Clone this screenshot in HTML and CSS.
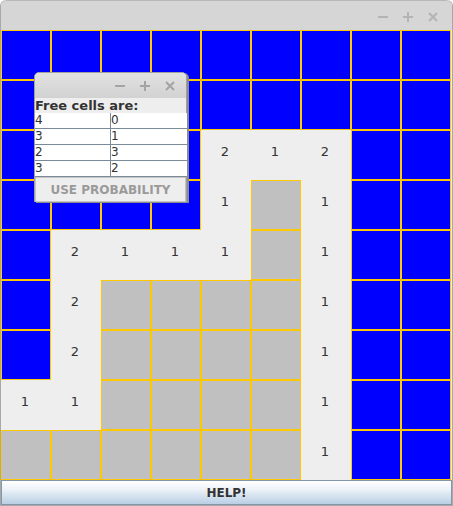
FILE: index.html
```html
<!DOCTYPE html>
<html lang="en">
<head>
    <meta charset="UTF-8">
    <title>Minesweeper</title>
    <link rel="stylesheet" href="styles.css">
</head>
<body>
    <div id="win">
        <div class="titlebar">
            <svg class="ctl" viewBox="0 0 14 14"><path d="M2 7h10"/></svg>
            <svg class="ctl" viewBox="0 0 14 14"><path d="M2 7h10M7 2v10"/></svg>
            <svg class="ctl" viewBox="0 0 14 14"><path d="M3 3l8 8M11 3l-8 8"/></svg>
        </div>
        <div id="board">
            <div class="c b"></div><div class="c b"></div><div class="c b"></div><div class="c b"></div><div class="c b"></div><div class="c b"></div><div class="c b"></div><div class="c b"></div><div class="c b"></div>
            <div class="c b"></div><div class="c b"></div><div class="c b"></div><div class="c b"></div><div class="c b"></div><div class="c b"></div><div class="c b"></div><div class="c b"></div><div class="c b"></div>
            <div class="c b"></div><div class="c b"></div><div class="c b"></div><div class="c b"></div><div class="c o">2</div><div class="c o">1</div><div class="c o">2</div><div class="c b"></div><div class="c b"></div>
            <div class="c b"></div><div class="c b"></div><div class="c b"></div><div class="c b"></div><div class="c o">1</div><div class="c g"></div><div class="c o">1</div><div class="c b"></div><div class="c b"></div>
            <div class="c b"></div><div class="c o">2</div><div class="c o">1</div><div class="c o">1</div><div class="c o">1</div><div class="c g"></div><div class="c o">1</div><div class="c b"></div><div class="c b"></div>
            <div class="c b"></div><div class="c o">2</div><div class="c g"></div><div class="c g"></div><div class="c g"></div><div class="c g"></div><div class="c o">1</div><div class="c b"></div><div class="c b"></div>
            <div class="c b"></div><div class="c o">2</div><div class="c g"></div><div class="c g"></div><div class="c g"></div><div class="c g"></div><div class="c o">1</div><div class="c b"></div><div class="c b"></div>
            <div class="c o">1</div><div class="c o">1</div><div class="c g"></div><div class="c g"></div><div class="c g"></div><div class="c g"></div><div class="c o">1</div><div class="c b"></div><div class="c b"></div>
            <div class="c g"></div><div class="c g"></div><div class="c g"></div><div class="c g"></div><div class="c g"></div><div class="c g"></div><div class="c o">1</div><div class="c b"></div><div class="c b"></div>
        </div>
        <button class="help">HELP!</button>

        <!-- probability dialog -->
        <div class="dialog">
            <div class="titlebar small">
                <svg class="ctl" viewBox="0 0 14 14"><path d="M2 7h10"/></svg>
                <svg class="ctl" viewBox="0 0 14 14"><path d="M2 7h10M7 2v10"/></svg>
                <svg class="ctl" viewBox="0 0 14 14"><path d="M3 3l8 8M11 3l-8 8"/></svg>
            </div>
            <div class="label">Free cells are:</div>
            <table class="free">
                <tr><td>4</td><td>0</td></tr>
                <tr><td>3</td><td>1</td></tr>
                <tr><td>2</td><td>3</td></tr>
                <tr><td>3</td><td>2</td></tr>
            </table>
            <button class="prob" disabled>USE PROBABILITY</button>
        </div>
    </div>
</body>
</html>
```
FILE: styles.css
```css
body{
    margin: 0;
    font-family: "DejaVu Sans", sans-serif;
}
#win{
    position: relative;
    width: 453px;
    height: 506px;
    box-sizing: border-box;
    border: 1px solid #a8a8a8;
    border-top: none;
    border-radius: 6px 6px 0 0;
    background: #eeeeee;
    overflow: hidden;
}
.titlebar{
    height: 30px;
    background: #d6d6d6;
    display: flex;
    justify-content: flex-end;
    align-items: center;
    gap: 11px;
    padding-right: 12px;
    padding-top: 3px;
    box-sizing: border-box;
    border-top: 1px solid #b8b8b8;
    border-radius: 6px 6px 0 0;
}
.ctl{
    width: 14px;
    height: 14px;
    fill: none;
    stroke: #b4b4b4;
    stroke-width: 2;
}
#board{
    display: grid;
    grid-template-columns: repeat(9, 50px);
    grid-auto-rows: 50px;
}
.c{
    box-sizing: border-box;
    display: flex;
    align-items: center;
    justify-content: center;
    padding-bottom: 8px;
    padding-right: 2px;
    font-size: 13px;
    color: #333333;
}
.b{
    background: #0000ff;
    border: 1px solid #ffc800;
}
.g{
    background: #c0c0c0;
    border: 1px solid #ffc800;
}
.o{
    background: #eeeeee;
}
.help{
    display: block;
    width: 451px;
    height: 25px;
    margin: 0;
    border: 1px solid #8497a8;
    background: linear-gradient(#ffffff, #eef3f8 35%, #b9cfe4);
    font-family: "DejaVu Sans", sans-serif;
    font-weight: bold;
    font-size: 12px;
    color: #333333;
    padding: 0;
}
.dialog{
    position: absolute;
    left: 33px;
    top: 72px;
    width: 153px;
    height: 130px;
    box-sizing: border-box;
    border: 1px solid #a0a0a0;
    border-radius: 5px 5px 0 0;
    background: #eeeeee;
    box-shadow: 2px 1px 0 #8c8c8c;
}
.titlebar.small{
    height: 25px;
    padding-top: 1px;
    padding-right: 9px;
    border-top: none;
    border-radius: 4px 4px 0 0;
    background: linear-gradient(#e2e2e2, #d2d2d2);
}
.titlebar.small .ctl{
    stroke: #a4a4a4;
}
.label{
    height: 15px;
    line-height: 15px;
    font-size: 13px;
    font-weight: bold;
    color: #333333;
}
.free{
    width: 152px;
    border-collapse: collapse;
    background: #ffffff;
    font-size: 12px;
    color: #333333;
}
.free td{
    height: 15px;
    padding: 0;
    line-height: 15px;
    border: 1px solid #7a8a99;
    border-left: none;
    border-top: none;
}
.free td:first-child{
    width: 75px;
}
.free td:last-child{
    border-right: none;
}
.prob{
    display: block;
    width: 151px;
    height: 25px;
    margin: 0;
    padding: 0;
    border: 1px solid #c4c4c4;
    background: #eeeeee;
    font-family: "DejaVu Sans", sans-serif;
    font-weight: bold;
    font-size: 12px;
    color: #9a9a9a;
}
```
